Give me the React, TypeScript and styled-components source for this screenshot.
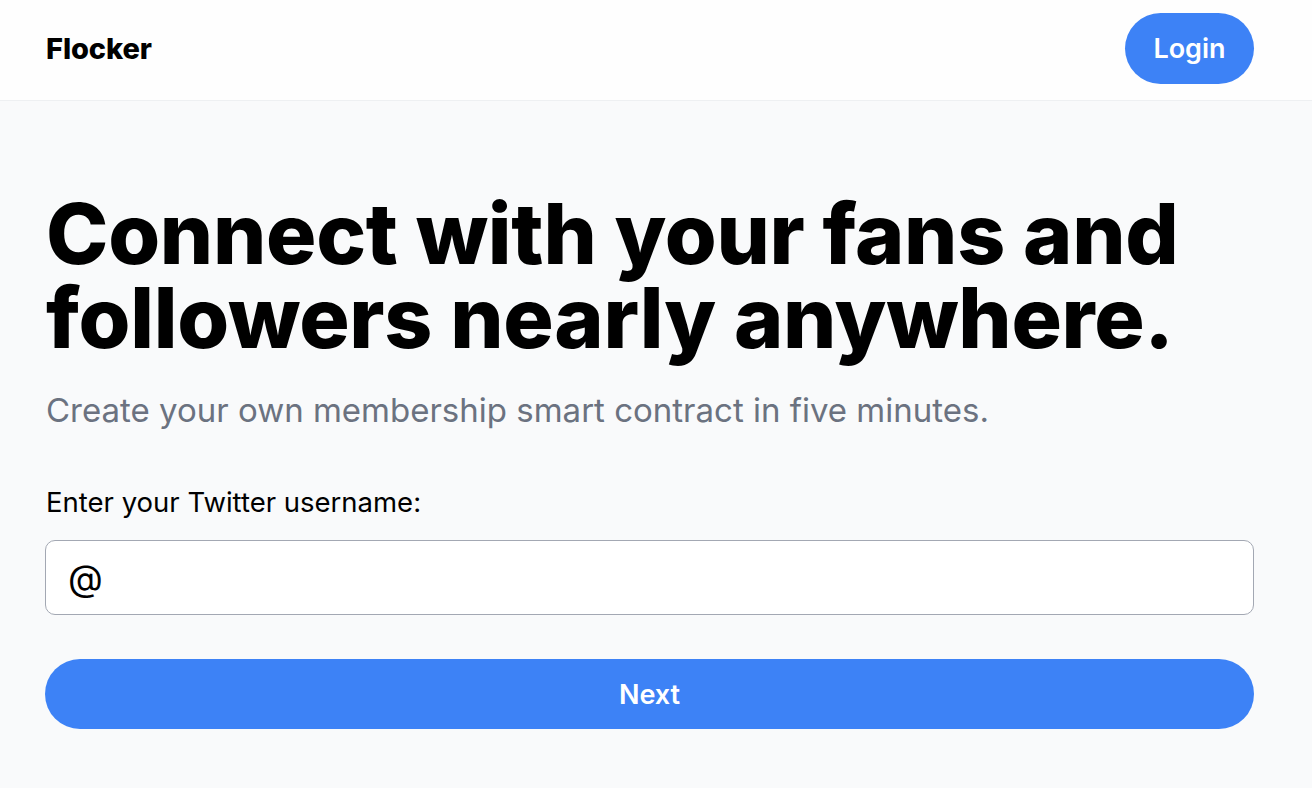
import React from "react";
import styled, { createGlobalStyle } from "styled-components";

const GlobalStyle = createGlobalStyle`
  * { box-sizing: border-box; }
  html, body { margin: 0; padding: 0; }
  body {
    background: #f9fafb;
    font-family: Inter, "Noto Sans", sans-serif;
    color: #000;
  }
`;

const Page = styled.div`
  min-height: 788px;
  background: #f9fafb;
`;

const Header = styled.header`
  height: 101px;
  background: #fefefe;
  border-bottom: 1px solid #eef0f2;
  display: flex;
  align-items: center;
  justify-content: space-between;
  padding: 0 58px 3px 46px;
`;

const Brand = styled.div`
  font-size: 29px;
  font-weight: 800;
  letter-spacing: -0.1px;
`;

const PillButton = styled.button<{ $wide?: boolean }>`
  border: none;
  background: #3d82f6;
  color: #fff;
  font-family: inherit;
  font-size: 27px;
  font-weight: 600;
  border-radius: 999px;
  cursor: pointer;
  height: ${(p) => (p.$wide ? "70px" : "71px")};
  width: ${(p) => (p.$wide ? "100%" : "129px")};
  padding: 0;
`;

const Main = styled.main`
  display: flex;
  flex-direction: column;
  padding: 91px 58px 0 45px;
`;

const Title = styled.h1`
  margin: 0 0 0 1px;
  font-size: 84px;
  line-height: 84px;
  font-weight: 800;
  letter-spacing: -0.3px;
`;

const Subtitle = styled.p`
  margin: 28px 0 0 1px;
  font-size: 33px;
  line-height: 44px;
  color: #6b7280;
`;

const Label = styled.label`
  margin: 54px 0 0 1px;
  font-size: 27.5px;
  line-height: 32px;
`;

const InputBox = styled.div`
  margin-top: 22px;
  height: 75px;
  background: #fff;
  border: 1px solid #a3a8b3;
  border-radius: 10px;
  display: flex;
  align-items: center;
  padding: 0 22px;
  gap: 4px;
`;

const At = styled.span`
  font-size: 36px;
  line-height: 1;
`;

const Field = styled.input`
  flex: 1;
  border: none;
  outline: none;
  background: transparent;
  font-family: inherit;
  font-size: 28px;
`;

const Actions = styled.div`
  margin-top: 44px;
`;

export default function App() {
  return (
    <Page>
      <GlobalStyle />
      <Header>
        <Brand>Flocker</Brand>
        <PillButton>Login</PillButton>
      </Header>
      <Main>
        <Title>
          Connect with your fans and
          <br />
          followers nearly anywhere.
        </Title>
        <Subtitle>Create your own membership smart contract in five minutes.</Subtitle>
        <Label htmlFor="user">Enter your Twitter username:</Label>
        <InputBox>
          <At>@</At>
          <Field id="user" />
        </InputBox>
        <Actions>
          <PillButton $wide>Next</PillButton>
        </Actions>
      </Main>
    </Page>
  );
}
